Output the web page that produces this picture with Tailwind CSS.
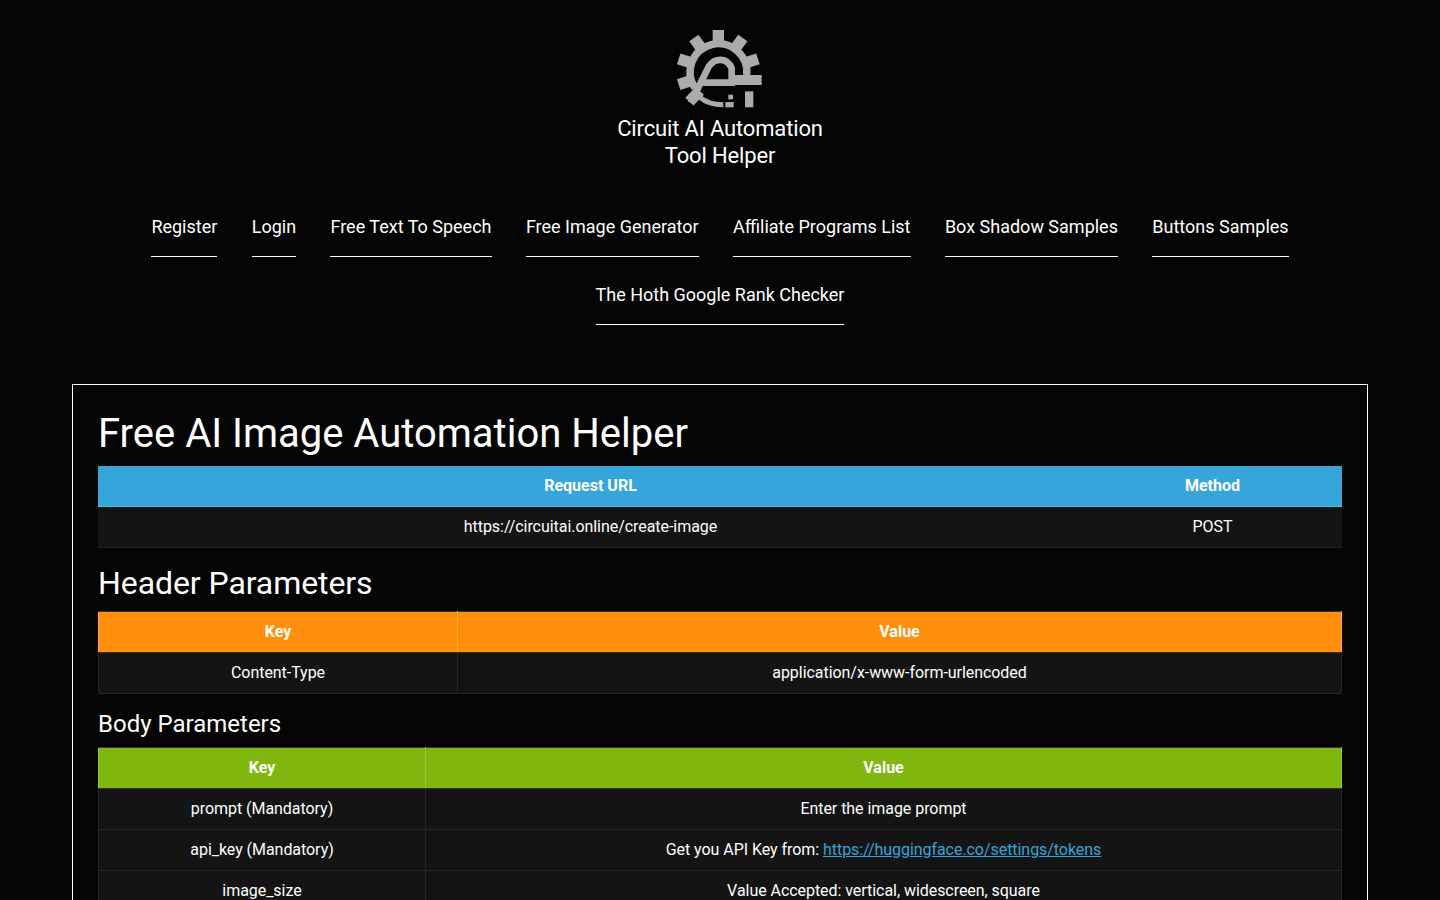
<!DOCTYPE html>
<html lang="en">
<head>
  <meta charset="UTF-8" />
  <meta name="viewport" content="width=device-width, initial-scale=1" />
  <title>Free AI Image Automation Helper</title>
  <script src="https://cdn.jsdelivr.net/npm/@tailwindcss/browser@4"></script>
</head>
<body class="bg-[#040404] text-white font-['Roboto',sans-serif] min-h-screen">

  <!-- Header -->
  <header class="flex flex-col items-center pt-5">
    <svg class="w-[120px] h-[100px]" viewBox="0 0 360 300" fill="none">
      <g fill="#a9abad">
        <path d="M158 30h34v45h-34z" />
        <path d="M158 30h34v45h-34z" transform="rotate(36 175 155)" />
        <path d="M158 30h34v45h-34z" transform="rotate(72 175 155)" />
        <path d="M158 30h34v45h-34z" transform="rotate(-36 175 155)" />
        <path d="M158 30h34v45h-34z" transform="rotate(-72 175 155)" />
        <path d="M158 30h34v45h-34z" transform="rotate(-108 175 155)" />
        <path d="M158 30h34v45h-34z" transform="rotate(-136 175 155)" />
      </g>
      <path d="M105 204A85 85 0 1 1 260 165" stroke="#a9abad" stroke-width="22" />
      <path d="M92 248L146 140C165 112 202 112 215 145V198" stroke="#a9abad" stroke-width="20" />
      <path d="M128 188H225" stroke="#a9abad" stroke-width="20" />
      <path d="M120 232Q145 254 190 254" stroke="#a9abad" stroke-width="15" />
      <g fill="#a9abad">
        <path d="M225 165h80v30h-80z" />
        <path d="M255 214h25v48h-25z" />
        <path d="M196 246h25v16h-25z" />
        <path d="M205 224h14v14h-14z" />
      </g>
    </svg>
    <div class="mt-[-5px] text-center text-[22px] tracking-[-0.15px] leading-[27px]">Circuit AI Automation<br />Tool Helper</div>
  </header>

  <!-- Menu -->
  <nav class="flex flex-wrap justify-center mx-[5%] mt-[44px] text-[18px] leading-[27px]">
    <a href="#" class="mx-[17.2px] mb-[24px] pb-[16px] border-b border-white">Register</a>
    <a href="#" class="mx-[17.2px] mb-[24px] pb-[16px] border-b border-white">Login</a>
    <a href="#" class="mx-[17.2px] mb-[24px] pb-[16px] border-b border-white">Free Text To Speech</a>
    <a href="#" class="mx-[17.2px] mb-[24px] pb-[16px] border-b border-white">Free Image Generator</a>
    <a href="#" class="mx-[17.2px] mb-[24px] pb-[16px] border-b border-white">Affiliate Programs List</a>
    <a href="#" class="mx-[17.2px] mb-[24px] pb-[16px] border-b border-white">Box Shadow Samples</a>
    <a href="#" class="mx-[17.2px] mb-[24px] pb-[16px] border-b border-white">Buttons Samples</a>
    <a href="#" class="mx-[17.2px] mb-[24px] pb-[16px] border-b border-white">The Hoth Google Rank Checker</a>
  </nav>

  <!-- Content -->
  <main class="mx-[5%] mt-[35px] mb-10 border border-white px-[25px] pt-[21px] pb-[40px]">
    <h1 class="text-[40px] leading-[55px]">Free AI Image Automation Helper</h1>

    <table class="w-full border-collapse mt-[5px] text-center text-[16px] leading-[24px]">
      <thead class="bg-[#36a5db]">
        <tr>
          <th class="w-[985px] h-[40px] font-bold border-b border-[#5bb7e4]">Request URL</th>
          <th class="h-[40px] font-bold border-b border-[#5bb7e4]">Method</th>
        </tr>
      </thead>
      <tbody class="bg-[#141414] tracking-[-0.05px]">
        <tr>
          <td class="h-[41px] border-b border-[#222]">https://circuitai.online/create-image</td>
          <td class="h-[41px] border-b border-[#222]">POST</td>
        </tr>
      </tbody>
    </table>

    <h2 class="text-[32px] tracking-[-0.08px] leading-[45px] mt-[13px]">Header Parameters</h2>

    <table class="w-full border-collapse mt-[5px] text-center text-[16px] leading-[24px]">
      <thead class="bg-[#ff8f0d]">
        <tr>
          <th class="w-[359px] h-[41px] font-bold border-t border-b border-l border-r border-t-[#333] border-b-[#333] border-x-[#ffa53d]">Key</th>
          <th class="h-[41px] font-bold border-t border-b border-l border-r border-t-[#333] border-b-[#333] border-x-[#ffa53d]">Value</th>
        </tr>
      </thead>
      <tbody class="bg-[#141414] tracking-[-0.05px]">
        <tr>
          <td class="h-[41px] border border-[#262626]">Content-Type</td>
          <td class="h-[41px] border border-[#262626]">application/x-www-form-urlencoded</td>
        </tr>
      </tbody>
    </table>

    <h3 class="text-[24px] leading-[34px] mt-[13px]">Body Parameters</h3>

    <table class="w-full border-collapse mt-[6px] text-center text-[16px] leading-[24px]">
      <thead class="bg-[#80b70e]">
        <tr>
          <th class="w-[327px] h-[41px] font-bold border-t border-b border-l border-r border-t-[#333] border-b-[#333] border-x-[#98c83a]">Key</th>
          <th class="h-[41px] font-bold border-t border-b border-l border-r border-t-[#333] border-b-[#333] border-x-[#98c83a]">Value</th>
        </tr>
      </thead>
      <tbody class="bg-[#141414] tracking-[-0.05px]">
        <tr>
          <td class="h-[41px] border border-[#262626]">prompt (Mandatory)</td>
          <td class="h-[41px] border border-[#262626]">Enter the image prompt</td>
        </tr>
        <tr>
          <td class="h-[41px] border border-[#262626]">api_key (Mandatory)</td>
          <td class="h-[41px] border border-[#262626]">Get you API Key from: <a href="#" class="text-[#36a5db] underline">https://huggingface.co/settings/tokens</a></td>
        </tr>
        <tr>
          <td class="h-[41px] border border-[#262626]">image_size</td>
          <td class="h-[41px] border border-[#262626]">Value Accepted: vertical, widescreen, square</td>
        </tr>
      </tbody>
    </table>
  </main>
</body>
</html>
